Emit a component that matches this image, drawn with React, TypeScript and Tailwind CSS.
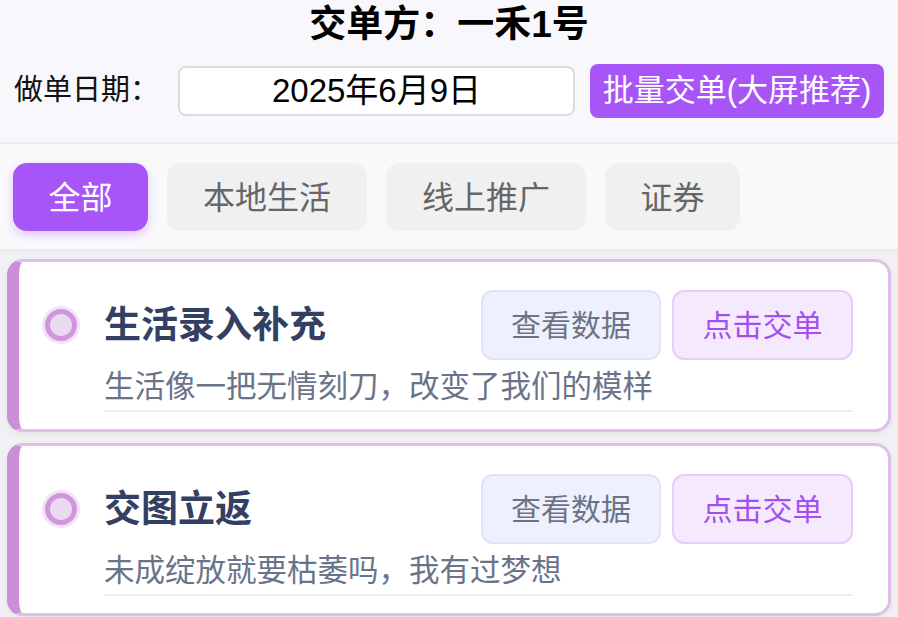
import React from 'react';

const font = "font-['Liberation_Sans','Noto_Sans_CJK_SC',sans-serif]";

const tabs = ['全部', '本地生活', '线上推广', '证券'];

const items = [
  { title: '生活录入补充', desc: '生活像一把无情刻刀，改变了我们的模样' },
  { title: '交图立返', desc: '未成绽放就要枯萎吗，我有过梦想' },
];

function Radio() {
  return (
    <div className="h-[38px] w-[38px] shrink-0 rounded-full bg-[#f1e2f5] p-[3px]">
      <div className="h-full w-full rounded-full border-[5px] border-[#d096db] bg-[#ebd9f1]" />
    </div>
  );
}

function Card({ title, desc }: { title: string; desc: string }) {
  return (
    <div className="rounded-[16px] border-[3px] border-l-[12px] border-[#dfbfe7] border-l-[#cc8dd9] bg-white pl-[23px] pr-[35px] pt-[28px] pb-[17px] shadow-[0_2px_6px_rgba(0,0,0,0.06)]">
      <div className="flex items-center">
        <Radio />
        <div className="ml-[24px] flex flex-1 items-center justify-between">
          <div className="text-[37px] font-bold leading-none text-[#334063]">{title}</div>
          <div className="flex gap-[11px]">
            <button className="h-[70px] w-[180px] rounded-[12px] border-2 border-[#dde3fb] bg-[#eef1fd] text-[30px] text-[#6b7487]">
              查看数据
            </button>
            <button className="h-[70px] w-[181px] rounded-[12px] border-2 border-[#e6cdf7] bg-[#f5e9fe] text-[30px] text-[#a34ff0]">
              点击交单
            </button>
          </div>
        </div>
      </div>
      <div className="ml-[62px] border-b-2 border-[#ececf2] pb-[6px] pt-[8px] text-[30.5px] leading-[36px] text-[#6a7489]">
        {desc}
      </div>
    </div>
  );
}

export default function App() {
  return (
    <div className={`${font} h-[617px] w-full overflow-hidden bg-[#f1f1f3]`}>
      <div className="border-b-2 border-[#ebebef] bg-[#f8f8fc] px-[14px] pb-[24px]">
        <h1 className="pt-[3px] text-center text-[37px] font-bold leading-[44px] text-black">交单方：一禾1号</h1>
        <div className="mt-[17px] flex items-center">
          <span className="w-[164px] text-[29px] text-[#111]">做单日期：</span>
          <div className="flex h-[50px] flex-1 items-center justify-center rounded-[8px] border-2 border-[#dddddf] bg-white text-[33px] text-black">
            2025年6月9日
          </div>
          <button className="ml-[15px] h-[54px] w-[294px] rounded-[8px] bg-[#a855f7] text-[31px] text-white">
            批量交单(大屏推荐)
          </button>
        </div>
      </div>
      <div className="flex gap-[19px] bg-[#f9f9fc] px-[13px] pb-[18px] pt-[19px] shadow-[0_3px_4px_rgba(0,0,0,0.04)]">
        {tabs.map((t, i) => (
          <button
            key={t}
            className={
              i === 0
                ? 'h-[68px] w-[135px] rounded-[14px] bg-[#a855f7] pt-[2px] text-[32px] text-white shadow-[0_4px_10px_rgba(168,85,247,0.3)]'
                : t.length === 2
                  ? 'h-[68px] w-[135px] rounded-[14px] bg-[#f0f0f0] pt-[2px] text-[32px] text-[#666]'
                  : 'h-[68px] w-[200px] rounded-[14px] bg-[#f0f0f0] pt-[2px] text-[32px] text-[#666]'
            }
          >
            {t}
          </button>
        ))}
      </div>
      <div className="flex flex-col gap-[11px] px-[7px] pt-[10px]">
        {items.map((it) => (
          <Card key={it.title} title={it.title} desc={it.desc} />
        ))}
      </div>
    </div>
  );
}
